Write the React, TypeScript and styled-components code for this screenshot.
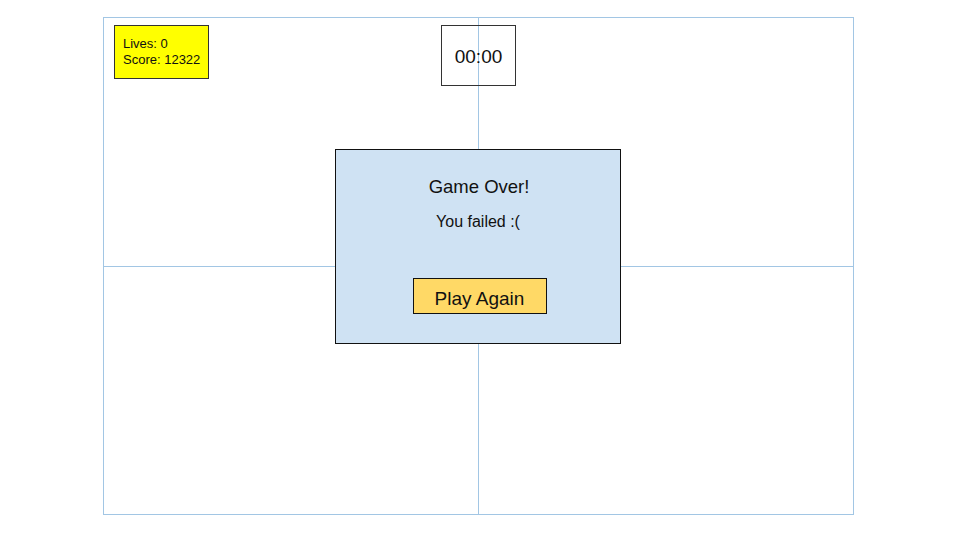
import React from 'react';
import styled, { createGlobalStyle } from 'styled-components';

const GlobalStyle = createGlobalStyle`
	html, body {
		margin: 0;
		padding: 0;
		background: #ffffff;
		font-family: 'Liberation Sans', Arial, sans-serif;
		color: #111111;
	}
`;

const LINE = '#a2c6e4';

const Page = styled.div`
	width: 960px;
	height: 540px;
	padding: 17px 0 0 103px;
	box-sizing: border-box;
`;

const Board = styled.div`
	position: relative;
	width: 751px;
	height: 498px;
	box-sizing: border-box;
	border: 1px solid ${LINE};
	display: grid;
	grid-template-columns: 375px 1fr;
	grid-template-rows: 249px 1fr;
`;

const Quadrant = styled.div<{ right?: boolean; bottom?: boolean }>`
	border-right: ${(p) => (p.right ? 'none' : `1px solid ${LINE}`)};
	border-bottom: ${(p) => (p.bottom ? 'none' : `1px solid ${LINE}`)};
`;

const Stats = styled.div`
	position: absolute;
	left: 10px;
	top: 7px;
	width: 95px;
	height: 54px;
	box-sizing: border-box;
	border: 1px solid #333333;
	background: #ffff00;
	padding: 10px 0 0 8px;
	font-size: 13px;
	line-height: 16px;
`;

const Timer = styled.div`
	position: absolute;
	left: 337px;
	top: 7px;
	width: 75px;
	height: 61px;
	box-sizing: border-box;
	border: 1px solid #333333;
	display: flex;
	align-items: center;
	justify-content: center;
	font-size: 19px;
	padding-top: 3px;
`;

const Dialog = styled.div`
	position: absolute;
	left: 231px;
	top: 131px;
	width: 286px;
	height: 195px;
	box-sizing: border-box;
	border: 1px solid #111111;
	background: #cfe2f3;
	display: flex;
	flex-direction: column;
	align-items: center;
	padding-top: 26px;
`;

const Title = styled.div`
	font-size: 18.5px;
	line-height: 22px;
	height: 22px;
	margin-left: 2px;
`;

const Message = styled.div`
	font-size: 16px;
	line-height: 18px;
	margin-top: 15px;
`;

const PlayButton = styled.button`
	margin-top: 47px;
	margin-left: 3px;
	width: 134px;
	height: 36px;
	box-sizing: border-box;
	border: 1px solid #111111;
	background: #ffd966;
	font-family: 'Liberation Sans', Arial, sans-serif;
	font-size: 19px;
	color: #111111;
	padding: 5px 0 0;
	cursor: pointer;
`;

export default function App() {
	return (
		<>
			<GlobalStyle />
			<Page>
				<Board>
					<Quadrant />
					<Quadrant right />
					<Quadrant bottom />
					<Quadrant right bottom />
					<Stats>
						<div>Lives: 0</div>
						<div>Score: 12322</div>
					</Stats>
					<Timer>00:00</Timer>
					<Dialog>
						<Title>Game Over!</Title>
						<Message>You failed :(</Message>
						<PlayButton>Play Again</PlayButton>
					</Dialog>
				</Board>
			</Page>
		</>
	);
}
